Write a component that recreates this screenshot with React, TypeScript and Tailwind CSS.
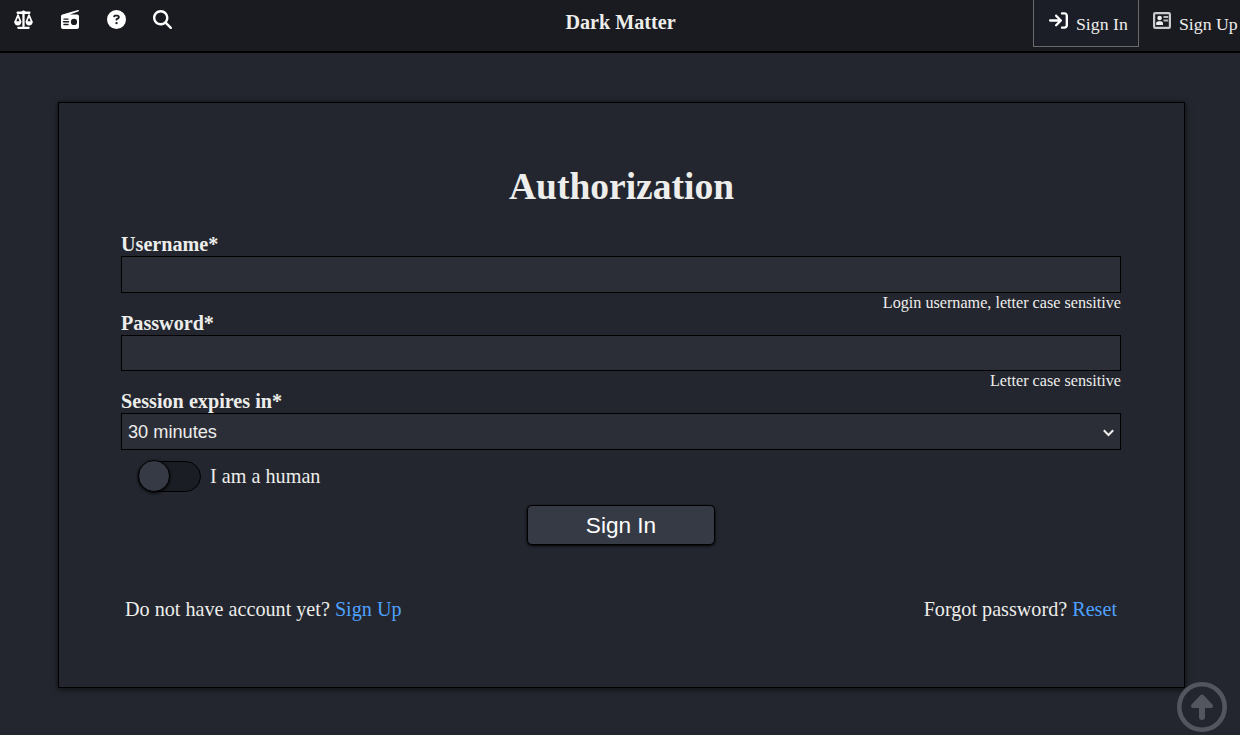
import React from "react";
import { FaArrowRightToBracket, FaCircleQuestion, FaMagnifyingGlass } from "react-icons/fa6";

function ScaleIcon() {
  return (
    <svg viewBox="0 0 20 20" className="size-[19px]" fill="none" stroke="currentColor" strokeLinecap="round" strokeLinejoin="round">
      <path d="M3.8 2.9H16.2M10 2V17" strokeWidth="2.4" />
      <circle cx="10" cy="2.6" r="2.2" fill="currentColor" stroke="none" />
      <path d="M4.6 18.7H15.4" strokeWidth="2.4" />
      <path d="M4.2 5.3L1.5 12M4.2 5.3L6.7 12M15.8 5.3L13.3 12M15.8 5.3L18.5 12" strokeWidth="1.8" />
      <path d="M.1 11.8H7.9C7.7 14.8 6.2 16.2 4 16.2S.3 14.8.1 11.8ZM12.1 11.8H19.9C19.7 14.8 18.2 16.2 16 16.2S12.3 14.8 12.1 11.8Z" fill="currentColor" stroke="none" />
    </svg>
  );
}

function RadioIcon() {
  return (
    <svg viewBox="0 0 18 19" className="h-[19px] w-[18px]" fill="currentColor">
      <path fillRule="evenodd" d="M17 .1c.6-.2 1 .1 1 .5 0 .5-.3.8-.8 1L9 4.4h7c1.2 0 2 .8 2 2V17c0 1.200-.8 2-2 2H2c-1.200 0-2-.8-2-2V6.500c0-1 .5-1.600 1.400-1.900ZM3 8.400c-1 0-1 1.400 0 1.400h4c1 0 1-1.400 0-1.400Zm-.5 2.700c-1 0-1 1.400 0 1.400h5c1 0 1-1.400 0-1.400Zm.5 2.700c-1 0-1 1.400 0 1.400h4c1 0 1-1.400 0-1.400Zm10-5a3.100 3.100 0 1 0 0 6.200 3.100 3.100 0 0 0 0-6.200Z" />
    </svg>
  );
}

function CardIcon() {
  return (
    <svg viewBox="0 0 18 17" className="h-[17px] w-[18px]">
      <rect x="1.1" y="1.1" width="15.8" height="14.8" rx="1.2" fill="none" stroke="#c9cbce" strokeWidth="2.2" />
      <circle cx="6.6" cy="6" r="2.3" fill="#eee" />
      <path d="M3.200 13V11.300C3.200 9.800 4.500 9.300 6.600 9.300S10 9.800 10 11.300V13Z" fill="#eee" />
      <path d="M10.500 5H15.200M10.500 8.500H15.200" stroke="#b9bbbe" strokeWidth="2" />
    </svg>
  );
}

function Field({ label, help, height }: { label: string; help: string; height: string }) {
  return (
    <label className="block">
      <span className="block h-[23px] text-[20.16px] font-bold leading-[23px]">{label}</span>
      <input className={`block w-full border border-black bg-[#2c2e37] px-1.5 outline-none ${height}`} />
      <span className="block h-[19px] text-right text-[16.16px] leading-[19px]">{help}</span>
    </label>
  );
}

export default function App() {
  return (
    <div className="relative h-[735px] overflow-hidden bg-[#23262e] font-['Liberation_Serif',serif] text-[#ededeb]">
      <header className="grid h-[53px] grid-cols-[1fr_auto_1fr] items-start border-b-2 border-black bg-[#1a1b20]">
        <nav className="flex gap-[27px] pl-[14px] pt-[10px] text-white">
          <a className="size-[19px]"><ScaleIcon /></a>
          <a className="size-[19px] pl-px"><RadioIcon /></a>
          <a className="ml-px size-[19px]"><FaCircleQuestion className="size-[19px]" /></a>
          <a className="size-[19px]"><FaMagnifyingGlass className="size-[19px]" /></a>
        </nav>
        <div className="pl-px pt-[11px] text-[20.16px] font-bold leading-[23px]">Dark Matter</div>
        <div className="flex justify-end whitespace-nowrap text-[17.75px] leading-5">
          <a className="flex h-[47px] w-[106px] border border-t-0 border-[#6b6b6e] bg-[#1b1e26] pl-[15px]">
            <FaArrowRightToBracket className="mt-[11px] size-[19px] text-white" />
            <span className="ml-2 mt-[14px]">Sign In</span>
          </a>
          <a className="flex w-[101px] pl-[14px]">
            <span className="mt-[12px]"><CardIcon /></span>
            <span className="ml-2 mt-[14px]">Sign Up</span>
          </a>
        </div>
      </header>

      <main className="ml-[58px] mt-[49px] h-[586px] w-[1127px] border border-black px-[62px] pt-[61px] shadow-[0_1px_6px_#000000b0]">
        <h1 className="mb-[24px] h-[45px] text-center text-[37.5px] font-bold leading-[45px]">Authorization</h1>
        <form className="w-[1000px]">
          <Field label="Username*" help="Login username, letter case sensitive" height="h-[37px]" />
          <Field label="Password*" help="Letter case sensitive" height="h-[36px]" />
          <div className="h-[23px] text-[20.2px] font-bold leading-[23px]">Session expires in*</div>
          <div className="flex h-[37px] items-center justify-between border border-black bg-[#2c2e37] px-1.5 font-['Liberation_Sans',sans-serif] text-[18.2px]">
            <span className="pt-0.5">30 minutes</span>
            <svg viewBox="0 0 11 8" className="mt-0.5 h-2 w-[11px]" fill="none" stroke="currentColor" strokeWidth="2"><path d="M.8 1.200L5.500 6L10.200 1.200" /></svg>
          </div>
          <label className="ml-[17px] mt-[11px] flex h-[31px] items-center">
            <span className="flex h-[31px] w-[63px] items-center rounded-full border border-black bg-[#1b1d24]">
              <span className="-ml-px -mt-px size-8 rounded-full border border-black bg-[#363a45] shadow-[0_1px_3px_black]" />
            </span>
            <span className="ml-[9px] text-[20.2px] leading-[23px]">I am a human</span>
          </label>
          <button type="button" className="mx-auto mt-[13px] block h-10 w-[188px] rounded-[5px] border border-black bg-[#363a45] pt-0.5 font-['Liberation_Sans',sans-serif] text-[22.6px] text-white shadow-[0_1px_3px_black]">Sign In</button>
        </form>
        <div className="mt-[53px] flex w-[1000px] justify-between px-1 text-[20.16px] leading-[23px]">
          <p>Do not have account yet? <a className="text-[#4ea1ff]">Sign Up</a></p>
          <p>Forgot password? <a className="text-[#4ea1ff]">Reset</a></p>
        </div>
      </main>

      <a className="absolute left-[1177px] top-[682px] text-[#53565e]">
        <svg viewBox="0 0 50 50" className="size-[50px]">
          <circle cx="25" cy="25" r="22.7" fill="none" stroke="currentColor" strokeWidth="4.6" />
          <path d="M25 14.500L34 24H16Z" fill="currentColor" stroke="currentColor" strokeWidth="4" strokeLinejoin="round" />
          <path d="M25 20V35" stroke="currentColor" strokeWidth="6" strokeLinecap="round" />
        </svg>
      </a>
    </div>
  );
}
